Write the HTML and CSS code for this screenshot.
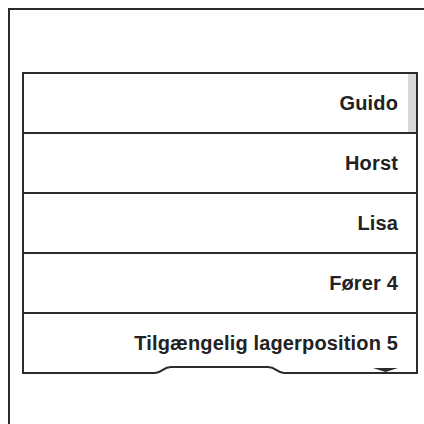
FILE: index.html
```html
<!DOCTYPE html>
<html lang="da">
<head>
  <meta charset="UTF-8">
  <title>Picker</title>
  <link rel="stylesheet" href="styles.css">
</head>
<body>
  <div class="frame">
    <div class="picker">
      <div class="scrollbar"></div>
      <div class="row">Guido</div>
      <div class="row">Horst</div>
      <div class="row">Lisa</div>
      <div class="row">Fører 4</div>
      <div class="row last">Tilgængelig lagerposition 5</div>
      <svg class="bottom" width="396" height="10" viewBox="0 0 396 10">
        <path d="M0 9 H133 C140 9 141 3 149 3 H246 C254 3 255 9 262 9 H396" fill="none" stroke="#2b2b2b" stroke-width="2"/>
        <path d="M351 4 H376 L363.5 8 Z" fill="#2b2b2b"/>
      </svg>
    </div>
  </div>
</body>
</html>
```

FILE: styles.css
```css
body {
  margin: 0;
  background: #fff;
  font-family: "Liberation Sans", Arial, sans-serif;
}

.frame {
  margin: 8px 0 0 8px;
  height: 416px;
  border-top: 2px solid #2b2b2b;
  border-left: 2px solid #2b2b2b;
  padding: 62px 0 0 12px;
  box-sizing: border-box;
}

.picker {
  position: relative;
  width: 396px;
  box-sizing: border-box;
  border: 2px solid #2b2b2b;
  border-bottom: none;
  padding-bottom: 2px;
}

.scrollbar {
  position: absolute;
  top: 0;
  right: 0;
  width: 8px;
  height: 58px;
  background: #d9d9d9;
}

.row {
  height: 58px;
  border-bottom: 2px solid #2b2b2b;
  display: flex;
  align-items: center;
  justify-content: flex-end;
  padding-right: 18px;
  font-size: 20px;
  font-weight: bold;
  letter-spacing: 0.15px;
  color: #222;
}

.row.last {
  border-bottom: none;
}

.bottom {
  position: absolute;
  left: -2px;
  bottom: 0;
}
```
